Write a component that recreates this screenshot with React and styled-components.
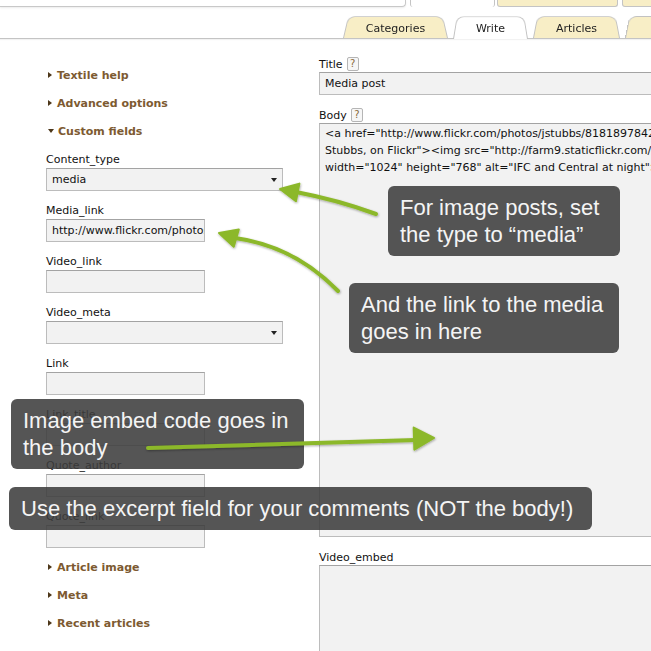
import styled, { createGlobalStyle } from "styled-components";

const GlobalStyle = createGlobalStyle`
  html, body {
    margin: 0;
    padding: 0;
    background: #fff;
    overflow: hidden;
  }
  body {
    font-family: "DejaVu Sans", Verdana, sans-serif;
    font-size: 11px;
    color: #111;
  }
`;

const fields = [
  { label: "Content_type", kind: "select", value: "media" },
  { label: "Media_link", value: "http://www.flickr.com/photos/jstubbs/8181897842/" },
  { label: "Video_link" },
  { label: "Video_meta", kind: "select" },
  { label: "Link" },
  { label: "Link_title" },
  { label: "Quote_author" },
  { label: "Quote_link" },
];

const bodyLines = [
  '<a href="http://www.flickr.com/photos/jstubbs/8181897842/" title="IFC and Central at night by Joe',
  'Stubbs, on Flickr"><img src="http://farm9.staticflickr.com/8202/8181897842_6f1b0c2e4a_b.jpg"',
  'width="1024" height="768" alt="IFC and Central at night"></a>',
];

// arrowhead triangle from tip + direction
const head = (tx, ty, dx, dy, len, half) => {
  const m = Math.hypot(dx, dy);
  const ux = dx / m;
  const uy = dy / m;
  const bx = tx - ux * len;
  const by = ty - uy * len;
  return `${tx},${ty} ${bx - uy * half},${by + ux * half} ${bx + uy * half},${by - ux * half}`;
};

const App = () => {
  return (
    <Page>
      <GlobalStyle />
      <Header>
        <TopStrip>
          <TopLeft />
          <TopTab $w={85} $gap={4} $active>
            <TopLabel>Content</TopLabel>
          </TopTab>
          <TopTab $w={121} $gap={2}>
            <TopLabel>Presentation</TopLabel>
          </TopTab>
          <TopTab $w={100} $gap={4}>
            <TopLabel>Admin</TopLabel>
          </TopTab>
        </TopStrip>
        <SubNav>
          <Tab $w={105}>Categories</Tab>
          <Tab $w={75} $active>
            Write
          </Tab>
          <Tab $w={87}>Articles</Tab>
          <Tab $w={90}>Images</Tab>
        </SubNav>
      </Header>

      <Main>
        <LeftCol>
          <Heading>
            <Twisty />
            Textile help
          </Heading>
          <Heading>
            <Twisty />
            Advanced options
          </Heading>
          <Heading>
            <Twisty $open />
            Custom fields
          </Heading>
          {fields.map((f) => (
            <Field key={f.label}>
              <Label>{f.label}</Label>
              {f.kind === "select" ? (
                <Select>
                  <span>{f.value}</span>
                  <Caret />
                </Select>
              ) : (
                <Input>{f.value}</Input>
              )}
            </Field>
          ))}
          <Heading>
            <Twisty />
            Article image
          </Heading>
          <Heading>
            <Twisty />
            Meta
          </Heading>
          <Heading>
            <Twisty />
            Recent articles
          </Heading>
        </LeftCol>

        <RightCol>
          <LabelRow>
            Title <Help>?</Help>
          </LabelRow>
          <TitleInput>Media post</TitleInput>
          <LabelRow>
            Body <Help>?</Help>
          </LabelRow>
          <TextArea $h={414}>
            {bodyLines.map((l) => (
              <Line key={l}>{l}</Line>
            ))}
          </TextArea>
          <LabelRow>Video_embed</LabelRow>
          <TextArea $h={120} />
        </RightCol>
      </Main>

      <Arrows width="651" height="651" viewBox="0 0 651 651">
        <defs>
          <filter id="sh" x="-20%" y="-20%" width="140%" height="140%">
            <feDropShadow dx="0.5" dy="1" stdDeviation="0.8" floodOpacity="0.35" />
          </filter>
        </defs>
        <g filter="url(#sh)" fill="#8cb82a" stroke="#8cb82a" strokeLinecap="round" strokeLinejoin="round">
          <path d="M376 214 Q338 200 296 192" fill="none" strokeWidth="4" />
          <polygon points={head(280, 189, -0.98, -0.19, 18, 9)} strokeWidth="2" />
          <path d="M338 291 Q294 246 235 238" fill="none" strokeWidth="4" />
          <polygon points={head(219, 233, -0.96, -0.28, 18, 9)} strokeWidth="2" />
          <path d="M148 448 L416 440" fill="none" strokeWidth="4" />
          <polygon points={head(434, 438, 1, -0.03, 20, 11)} strokeWidth="2" />
        </g>
      </Arrows>

      <Callout $x={388} $y={186} $w={232}>
        For image posts, set
        <br />
        the type to “media”
      </Callout>
      <Callout $x={349} $y={283} $w={270}>
        And the link to the media
        <br />
        goes in here
      </Callout>
      <Callout $x={11} $y={399} $w={293}>
        Image embed code goes in
        <br />
        the body
      </Callout>
      <Callout $x={9} $y={487} $w={583}>
        Use the excerpt field for your comments (NOT the body!)
      </Callout>
    </Page>
  );
};

export default App;

const Page = styled.div`
  position: relative;
  width: 651px;
  height: 651px;
  overflow: hidden;
`;

const Header = styled.header`
  display: flex;
  flex-direction: column;
`;

const TopStrip = styled.div`
  display: flex;
  align-items: flex-end;
  height: 7px;
`;

const TopLeft = styled.div`
  width: 405px;
  height: 6px;
  border-right: 1px solid #c8c8c8;
  border-bottom: 1px solid #c8c8c8;
  border-bottom-right-radius: 4px;
  box-shadow: 0 1px 2px rgba(0, 0, 0, 0.08);
  flex-shrink: 0;
`;

const TopTab = styled.div`
  flex-shrink: 0;
  width: ${(p) => p.$w}px;
  height: 7px;
  margin-left: ${(p) => p.$gap}px;
  box-sizing: border-box;
  background: ${(p) => (p.$active ? "#fff" : "#f8eec6")};
  border: 1px solid #c4c4c4;
  border-top: none;
  border-bottom: ${(p) => (p.$active ? "none" : "1px solid #c4c4c4")};
  border-radius: 0 0 3px 3px;
  overflow: hidden;
  text-align: center;
  color: #222;
`;

const TopLabel = styled.span`
  display: block;
  margin-top: -10px;
  line-height: 13px;
`;

const SubNav = styled.nav`
  display: flex;
  align-items: flex-end;
  gap: 5px;
  height: 23px;
  margin-top: 8px;
  padding-left: 343px;
  border-bottom: 1px solid #c4c4c4;
  box-shadow: 0 1px 1px rgba(0, 0, 0, 0.05);
`;

const Tab = styled.div`
  position: relative;
  isolation: isolate;
  flex-shrink: 0;
  width: ${(p) => p.$w}px;
  height: ${(p) => (p.$active ? 23 : 22)}px;
  margin-bottom: ${(p) => (p.$active ? -1 : 0)}px;
  line-height: 25px;
  text-align: center;
  color: #222;

  &::before {
    content: "";
    position: absolute;
    left: 0;
    right: 0;
    bottom: 0;
    height: ${(p) => (p.$active ? 26 : 25)}px;
    z-index: -1;
    box-sizing: border-box;
    background: ${(p) => (p.$active ? "#fff" : "#f8eec6")};
    border: 1px solid #c2c2c2;
    border-bottom: none;
    border-radius: 8px 8px 0 0;
    transform-origin: 50% 100%;
    transform: perspective(60px) rotateX(15deg);
  }
`;

const Main = styled.main`
  display: flex;
  gap: 36px;
  padding-left: 46px;
`;

const LeftCol = styled.div`
  width: 237px;
  flex-shrink: 0;
  padding-top: 29px;
`;

const Heading = styled.div`
  display: flex;
  align-items: center;
  height: 14px;
  margin-bottom: 14px;
  font-weight: bold;
  color: #7d5a31;
`;

const Twisty = styled.span`
  width: 0;
  height: 0;
  margin: 0 5px 0 2px;
  ${(p) =>
    p.$open
      ? `border-left: 3.5px solid transparent;
         border-right: 3.5px solid transparent;
         border-top: 4px solid #4d3719;
         margin-right: 4px;`
      : `border-top: 3.5px solid transparent;
         border-bottom: 3.5px solid transparent;
         border-left: 4px solid #4d3719;
         margin-right: 5px;`}
`;

const Field = styled.div`
  display: flex;
  flex-direction: column;
  margin-bottom: 12px;
`;

const Label = styled.label`
  line-height: 14px;
  height: 14px;
  margin-top: 1px;
  margin-bottom: 1px;
  color: #111;
`;

const boxStyle = `
  box-sizing: border-box;
  height: 23px;
  background: #f2f2f2;
  border: 1px solid #bcbcbc;
  border-top-color: #a3a3a3;
  padding: 0 5px;
  line-height: 21px;
  white-space: nowrap;
  overflow: hidden;
  color: #111;
`;

const Input = styled.div`
  ${boxStyle}
  width: 159px;
  padding-right: 2px;
`;

const Select = styled.div`
  ${boxStyle}
  width: 237px;
  display: flex;
  align-items: center;
  justify-content: space-between;
  padding-right: 5px;
`;

const Caret = styled.span`
  width: 0;
  height: 0;
  border-left: 3.5px solid transparent;
  border-right: 3.5px solid transparent;
  border-top: 4px solid #222;
  margin-top: 1px;
`;

const RightCol = styled.div`
  width: 420px;
  flex-shrink: 0;
  padding-top: 18px;
`;

const LabelRow = styled.div`
  display: flex;
  align-items: center;
  gap: 4px;
  height: 14px;
  margin-bottom: 1px;
  color: #111;
`;

const Help = styled.span`
  box-sizing: border-box;
  width: 12px;
  height: 14px;
  border: 1px solid #b5b5b5;
  border-radius: 2px;
  background: #f6f6f6;
  color: #8a6a3c;
  font-size: 10px;
  line-height: 12px;
  text-align: center;
`;

const TitleInput = styled.div`
  ${boxStyle}
  width: 100%;
  margin-bottom: 13px;
  line-height: 22px;
`;

const TextArea = styled.div`
  box-sizing: border-box;
  width: 100%;
  height: ${(p) => p.$h}px;
  margin-bottom: 13px;
  padding: 1px 5px;
  background: #f2f2f2;
  border: 1px solid #bcbcbc;
  border-top-color: #a3a3a3;
  overflow: hidden;
  line-height: 17px;
  color: #111;
`;

const Line = styled.div`
  white-space: pre;
`;

const Arrows = styled.svg`
  position: absolute;
  left: 0;
  top: 0;
  pointer-events: none;
  z-index: 2;
`;

const Callout = styled.div`
  position: absolute;
  left: ${(p) => p.$x}px;
  top: ${(p) => p.$y}px;
  width: ${(p) => p.$w}px;
  box-sizing: border-box;
  padding: 8px 12px;
  background: rgba(62, 62, 62, 0.88);
  border-radius: 6px;
  color: #f4f4f4;
  font-family: "Liberation Sans", Arial, sans-serif;
  font-size: 22px;
  line-height: 27px;
  white-space: nowrap;
  z-index: 1;
`;
